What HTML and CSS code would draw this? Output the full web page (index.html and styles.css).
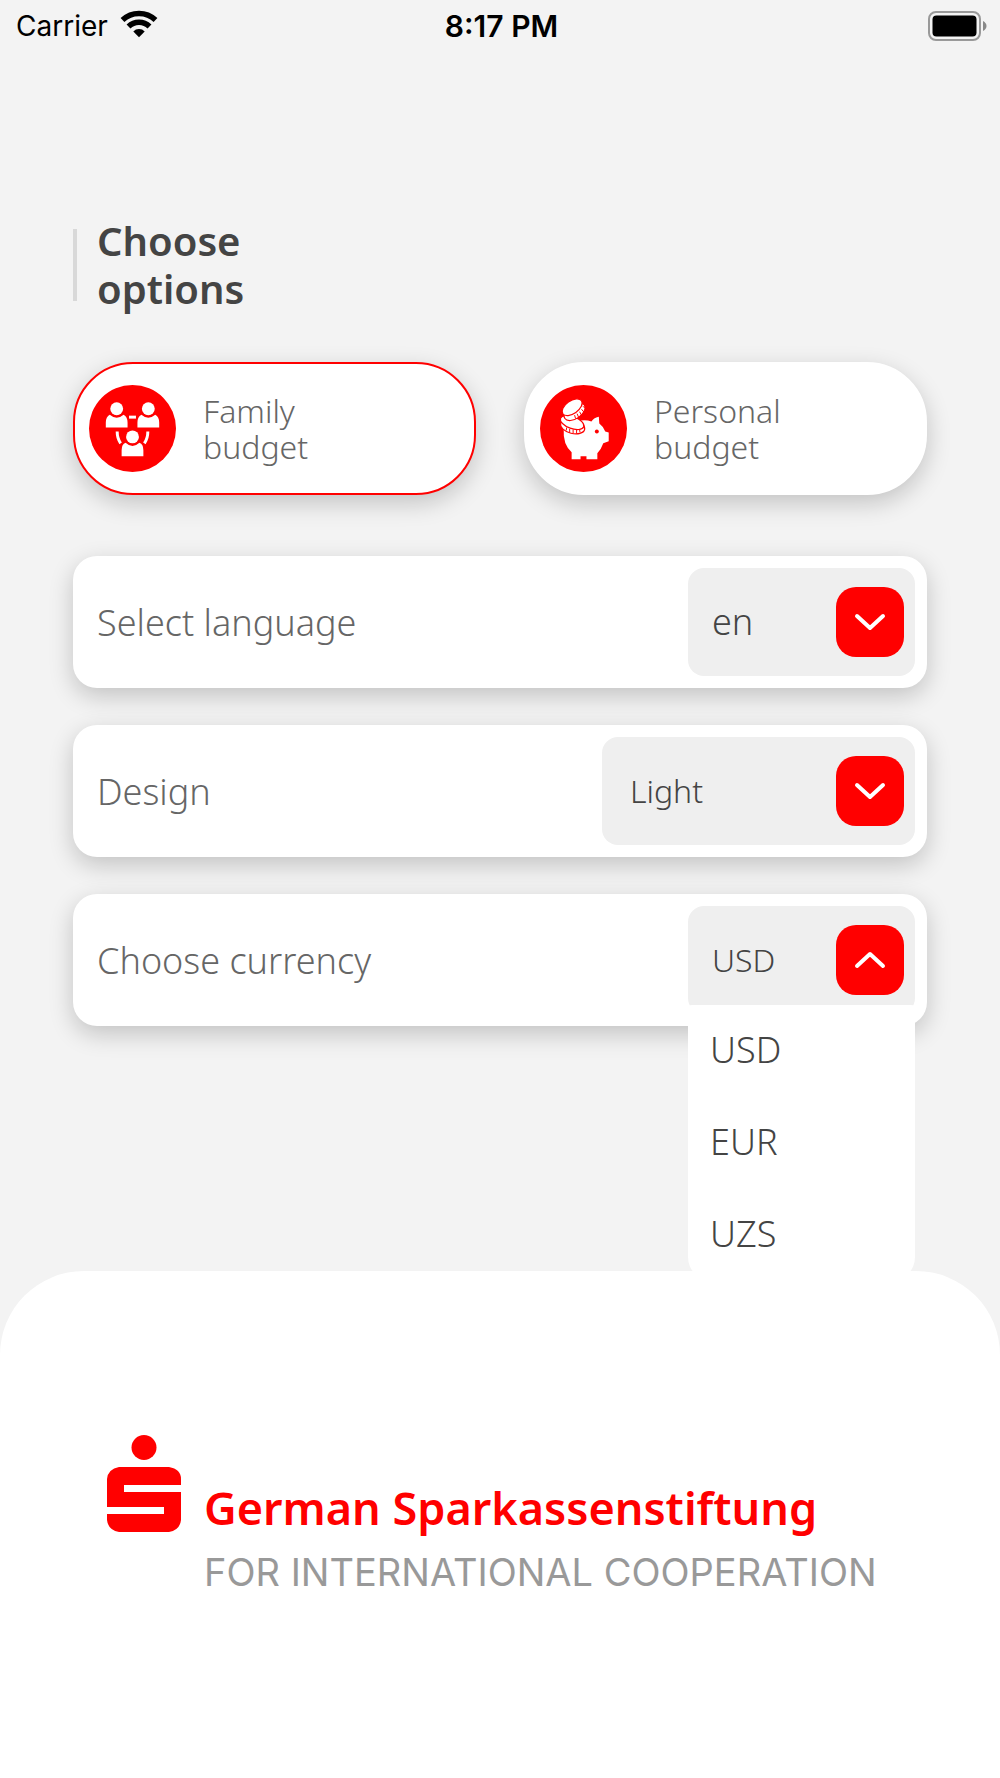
FILE: index.html
```html
<!DOCTYPE html>
<html lang="en">
<head>
    <meta charset="UTF-8">
    <meta name="viewport" content="width=device-width, initial-scale=1.0">
    <title>Choose options</title>
    <link rel="stylesheet" href="styles.css">
</head>
<body>

    <header class="status-bar">
        <div class="carrier">
            <span>Carrier</span>
            <svg class="wifi" viewBox="0 0 38 28" aria-hidden="true">
                <path d="M2.500 10 A24 24 0 0 1 35.500 10" fill="none" stroke="#000" stroke-width="5.500"/>
                <path d="M8.500 16.500 A15 15 0 0 1 29.500 16.500" fill="none" stroke="#000" stroke-width="5.500"/>
                <path d="M13.300 21.500 A8 8 0 0 1 24.700 21.500 L19 27.300 Z" fill="#000"/>
            </svg>
        </div>
        <div class="time">8:17 PM</div>
        <div class="battery">
            <svg width="59" height="31" viewBox="0 0 59 31" aria-hidden="true">
                <rect x="1" y="1" width="51" height="28" rx="7" fill="none" stroke="#999" stroke-width="2"/>
                <rect x="4.500" y="4.500" width="44" height="21" rx="4" fill="#000"/>
                <path d="M55 10 Q58.500 12 58.500 15 Q58.500 18 55 20 Z" fill="#888"/>
            </svg>
        </div>
    </header>

    <main class="options">
        <h1>Choose<br>options</h1>

        <div class="budget-types">
            <button type="button" class="budget-card selected">
                <svg class="budget-icon" viewBox="0 0 88 88" aria-hidden="true">
                    <circle cx="44" cy="44" r="44" fill="#f00"/>
                    <g fill="#fff">
                        <circle cx="28" cy="24" r="6.500"/>
                        <path d="M17 43 V38 Q17 32 21 30 Q28 36 35 30 Q39 32 39 38 V43 Z"/>
                        <circle cx="60" cy="24" r="6.500"/>
                        <path d="M49 43 V38 Q49 32 53 30 Q60 36 67 30 Q71 32 71 38 V43 Z"/>
                        <circle cx="44" cy="52.500" r="6.500"/>
                        <path d="M33 72 V66 Q33 60 37 58.500 Q44 65 51 58.500 Q55 60 55 66 V72 Z"/>
                        <path d="M40.500 31 H47.500 V34 H40.500 Z"/>
                    </g>
                    <path d="M28.500 47 Q28.500 54 32 59 M59.500 47 Q59.500 54 56 59" fill="none" stroke="#fff" stroke-width="3"/>
                </svg>
                <span>Family<br>budget</span>
            </button>
            <button type="button" class="budget-card">
                <svg class="budget-icon" viewBox="0 0 88 88" aria-hidden="true">
                    <circle cx="44" cy="44" r="44" fill="#f00"/>
                    <path d="M24 45 Q23 60 32 68 V75 H41 V72 H47 V75 H58 V69 Q62 65 64 59 L69.500 57 V48 L66 47 Q64 42 60 39 L59.500 32 Q54 33 52 37 Q47 35 41 36 Q32 38 24 45 Z" fill="#fff"/>
                    <circle cx="57.500" cy="47" r="2" fill="#f00"/>
                    <g fill="#fff" stroke="#f00" stroke-width="1.200">
                        <ellipse cx="33" cy="42" rx="12.500" ry="7" transform="rotate(14 33 42)"/>
                        <ellipse cx="32.500" cy="38" rx="12.500" ry="6" transform="rotate(20 32.500 38)"/>
                        <ellipse cx="35" cy="27" rx="12" ry="7" transform="rotate(-35 35 27)"/>
                        <ellipse cx="32.500" cy="22.500" rx="11.500" ry="6.500" transform="rotate(-35 32.500 22.500)"/>
                    </g>
                    <g stroke="#f00" stroke-width="1">
                        <path d="M35 30.500 L36 34 M37.500 29 L39 32.500 M40 27 L42 30.500 M42 24.500 L44.500 27.500 M43.500 21.500 L46 24"/>
                        <path d="M27 43 L26.500 46 M30 44.500 V48 M33.500 45 V49 M37 45.500 V49 M40 45 L40.500 48"/>
                    </g>
                </svg>
                <span>Personal<br>budget</span>
            </button>
        </div>

        <form class="settings">
            <div class="setting-row">
                <label for="language">Select language</label>
                <div class="dropdown large">
                    <select id="language" name="language">
                        <option value="en" selected>en</option>
                        <option value="de">de</option>
                        <option value="uz">uz</option>
                    </select>
                    <svg class="arrow" viewBox="0 0 68 70" aria-hidden="true">
                        <path d="M21 29 L34 41 L47 29"/>
                    </svg>
                </div>
            </div>

            <div class="setting-row">
                <label for="design">Design</label>
                <div class="dropdown wide">
                    <select id="design" name="design">
                        <option value="light" selected>Light</option>
                        <option value="dark">Dark</option>
                    </select>
                    <svg class="arrow" viewBox="0 0 68 70" aria-hidden="true">
                        <path d="M21 29 L34 41 L47 29"/>
                    </svg>
                </div>
            </div>

            <div class="setting-row">
                <label for="currency">Choose currency</label>
                <div class="dropdown">
                    <select id="currency" name="currency">
                        <option value="USD" selected>USD</option>
                        <option value="EUR">EUR</option>
                        <option value="UZS">UZS</option>
                    </select>
                    <svg class="arrow" viewBox="0 0 68 70" aria-hidden="true">
                        <path d="M21 41 L34 29 L47 41"/>
                    </svg>
                    <div class="menu" id="currencyMenu">
                        <button type="button" onclick="chooseCurrency('USD')">USD</button>
                        <button type="button" onclick="chooseCurrency('EUR')">EUR</button>
                        <button type="button" onclick="chooseCurrency('UZS')">UZS</button>
                    </div>
                </div>
            </div>
        </form>
    </main>

    <footer class="brand">
        <svg class="brand-logo" viewBox="0 0 74 98" aria-hidden="true">
            <g fill="#f00">
                <circle cx="37" cy="12.500" r="12.500"/>
                <path d="M12 32 H62 Q74 34 74 44 V50 H17 V57 H74 V85 Q73 95 62 97 H12 Q1 95 0 85 V79 H57 V72 H0 V44 Q1 34 12 32 Z"/>
            </g>
        </svg>
        <div class="brand-text">
            <p class="brand-name">German Sparkassenstiftung</p>
            <p class="brand-tagline">FOR INTERNATIONAL COOPERATION</p>
        </div>
    </footer>

    <script>
        function chooseCurrency(value) {
            document.getElementById('currency').value = value;
            document.getElementById('currencyMenu').hidden = true;
        }
    </script>

</body>
</html>
```
FILE: styles.css
```css
* {
    box-sizing: border-box;
}
body {
    margin: 0;
    min-height: 100vh;
    display: flex;
    flex-direction: column;
    background-color: #f3f3f3;
    color: #444;
    font-family: "Noto Sans", "Open Sans", sans-serif;
    font-weight: 300;
}
button, select {
    font: inherit;
    color: inherit;
    border: none;
    cursor: pointer;
}

/* Status bar */
.status-bar {
    display: grid;
    grid-template-columns: 1fr auto 1fr;
    align-items: center;
    height: 52px;
    padding: 0 13px 0 16px;
    color: #000;
    font-family: Inter, sans-serif;
    font-size: 28px;
    font-weight: 400;
}
.carrier {
    display: flex;
    align-items: center;
    gap: 12px;
}
.wifi {
    width: 38px;
    height: 28px;
    margin-bottom: 4px;
}
.time {
    font-size: 30px;
    font-weight: 600;
}
.battery {
    display: flex;
    justify-content: flex-end;
}

/* Options */
.options {
    padding: 165px 73px 245px;
}
h1 {
    position: relative;
    margin: 0;
    padding-left: 24px;
    font-size: 40px;
    line-height: 48px;
    font-weight: 600;
}
h1::before {
    content: "";
    position: absolute;
    left: 0;
    top: 12px;
    bottom: 12px;
    width: 4px;
    background-color: #d8d8d8;
}
.budget-types {
    display: grid;
    grid-template-columns: 1fr 1fr;
    gap: 48px;
    margin-top: 49px;
}
.budget-card {
    display: flex;
    align-items: center;
    gap: 27px;
    height: 133px;
    padding: 0 14px;
    border: 2px solid #fff;
    border-radius: 60px;
    background-color: #fff;
    box-shadow: 0 8px 24px rgba(0, 0, 0, 0.2);
    color: #666;
    font-size: 32px;
    line-height: 36px;
    text-align: left;
}
.budget-card.selected {
    border-color: #f00;
}
.budget-icon {
    width: 87px;
    height: 87px;
}
.settings {
    display: flex;
    flex-direction: column;
    gap: 37px;
    margin-top: 61px;
}
.setting-row {
    display: flex;
    justify-content: space-between;
    align-items: center;
    height: 132px;
    padding: 12px 12px 12px 24px;
    border-radius: 24px;
    background-color: #fff;
    box-shadow: 0 8px 24px rgba(0, 0, 0, 0.2);
}
.setting-row label {
    color: #666;
    font-size: 36px;
}
.dropdown {
    position: relative;
    width: 227px;
    height: 108px;
    font-size: 32px;
}
.dropdown.large {
    font-size: 36px;
}
.dropdown.wide {
    width: 313px;
}
.dropdown select {
    appearance: none;
    width: 100%;
    height: 100%;
    padding: 0 90px 2px 24px;
    border-radius: 16px;
    background-color: #efefef;
}
.dropdown.wide select {
    padding-left: 28px;
}
.arrow {
    position: absolute;
    top: 19px;
    right: 11px;
    width: 68px;
    height: 70px;
    border-radius: 20px;
    background-color: #f00;
    fill: none;
    stroke: #fff;
    stroke-width: 4;
    stroke-linecap: round;
    stroke-linejoin: round;
    pointer-events: none;
}
.menu {
    position: absolute;
    top: 99px;
    left: 0;
    right: 0;
    overflow: hidden;
    border-radius: 4px 4px 24px 24px;
    background-color: #fff;
}
.menu button {
    display: block;
    width: 100%;
    height: 92px;
    padding: 0 22px 4px;
    background: none;
    font-size: 36px;
    text-align: left;
}

/* Footer covers the end of the open menu */
.brand {
    position: relative;
    flex: 1;
    display: flex;
    align-items: flex-start;
    gap: 23px;
    padding: 164px 73px 0 107px;
    border-radius: 84px 84px 0 0;
    background-color: #fff;
}
.brand-logo {
    flex: none;
    width: 74px;
    height: 98px;
}
.brand-text {
    margin-top: 41px;
    white-space: nowrap;
}
.brand-text p {
    margin: 0;
    line-height: 64px;
}
.brand-name {
    color: #f00;
    font-size: 45px;
    font-weight: 600;
}
.brand-tagline {
    color: #999;
    font-family: Inter, sans-serif;
    font-size: 38px;
    font-weight: 400;
}
```
